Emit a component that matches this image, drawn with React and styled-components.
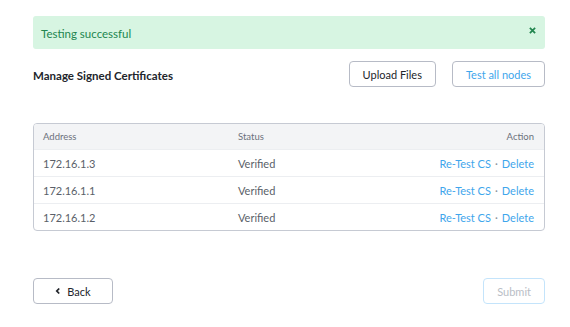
import React from 'react';
import styled, { createGlobalStyle } from 'styled-components';

const GlobalStyle = createGlobalStyle`
  body {
    margin: 0;
    background: #ffffff;
    font-family: "Lato", "Liberation Sans", sans-serif;
  }
`;

const rows = [
  { address: '172.16.1.3', status: 'Verified' },
  { address: '172.16.1.1', status: 'Verified' },
  { address: '172.16.1.2', status: 'Verified' },
];

const App = () => {
  return (
    <Page>
      <GlobalStyle />
      <Alert>
        <span>Testing successful</span>
        <CloseIcon viewBox="0 0 8 8">
          <path d="M1 1 L7 7 M7 1 L1 7" />
        </CloseIcon>
      </Alert>

      <Toolbar>
        <Title>Manage Signed Certificates</Title>
        <ButtonGroup>
          <Button>Upload Files</Button>
          <Button $variant="link">Test all nodes</Button>
        </ButtonGroup>
      </Toolbar>

      <Table>
        <HeadRow>
          <Cell>Address</Cell>
          <Cell>Status</Cell>
          <Cell $right>Action</Cell>
        </HeadRow>
        {rows.map((r) => (
          <Row key={r.address}>
            <Cell>{r.address}</Cell>
            <Cell>{r.status}</Cell>
            <Cell $right>
              <Link>Re-Test CS</Link>
              <Dot>·</Dot>
              <Link>Delete</Link>
            </Cell>
          </Row>
        ))}
      </Table>

      <Footer>
        <Button $wide>
          <Chevron viewBox="0 0 6 8">
            <path d="M4.2 1.5 L1.8 4 L4.2 6.5" />
          </Chevron>
          Back
        </Button>
        <Button $variant="disabled">Submit</Button>
      </Footer>
    </Page>
  );
};

const Page = styled.div`
  padding: 16px 25px 0 33px;
  display: flex;
  flex-direction: column;
`;

const Alert = styled.div`
  height: 33px;
  box-sizing: border-box;
  display: flex;
  align-items: center;
  justify-content: space-between;
  padding: 0 9px 0 8px;
  background: #d7f5e2;
  border-radius: 3px;
  color: #22864f;
  font-size: 11.5px;
  span {
    margin-top: 1px;
  }
`;

const CloseIcon = styled.svg`
  width: 7px;
  height: 7px;
  margin-top: -4px;
  path {
    stroke: #22864f;
    stroke-width: 2;
    fill: none;
  }
`;

const Toolbar = styled.div`
  margin-top: 12px;
  display: flex;
  align-items: center;
  justify-content: space-between;
`;

const Title = styled.div`
  font-size: 11.5px;
  font-weight: 700;
  color: #22252b;
  margin-top: 2px;
`;

const ButtonGroup = styled.div`
  display: flex;
  gap: 16px;
`;

const Button = styled.button`
  height: 26px;
  box-sizing: border-box;
  padding: 0 13px;
  display: inline-flex;
  align-items: center;
  justify-content: center;
  gap: 6px;
  background: #ffffff;
  border: 1px solid ${(p) => (p.$variant === 'disabled' ? '#c4e4fb' : '#b7bbc6')};
  border-radius: 4px;
  font-family: "Lato", "Liberation Sans", sans-serif;
  font-size: 11px;
  color: ${(p) =>
    p.$variant === 'link' ? '#3fa6ec' : p.$variant === 'disabled' ? '#b9bec6' : '#22252b'};
  width: ${(p) => (p.$wide ? '80px' : 'auto')};
  cursor: pointer;
`;

const Chevron = styled.svg`
  width: 6px;
  height: 8px;
  path {
    stroke: #22252b;
    stroke-width: 1.8;
    fill: none;
  }
`;

const Table = styled.div`
  margin-top: 36px;
  border: 1px solid #c6cad3;
  border-radius: 4px;
  overflow: hidden;
`;

const HeadRow = styled.div`
  display: grid;
  grid-template-columns: 195px 1fr 140px;
  height: 25px;
  align-items: center;
  padding: 0 10px 0 9px;
  background: #f3f4f6;
  font-size: 9.5px;
  color: #6c717c;
`;

const Row = styled.div`
  display: grid;
  grid-template-columns: 195px 1fr 140px;
  height: 26px;
  align-items: center;
  padding: 0 10px 0 9px;
  border-top: 1px solid #eceef1;
  font-size: 11px;
  color: #5a5f69;
  &:first-of-type {
    border-top: none;
  }
`;

const Cell = styled.div`
  text-align: ${(p) => (p.$right ? 'right' : 'left')};
  white-space: nowrap;
`;

const Link = styled.span`
  color: #3fa6ec;
  cursor: pointer;
`;

const Dot = styled.span`
  color: #8d929b;
  margin: 0 4px;
`;

const Footer = styled.div`
  margin-top: 47px;
  display: flex;
  justify-content: space-between;
`;

export default App;
